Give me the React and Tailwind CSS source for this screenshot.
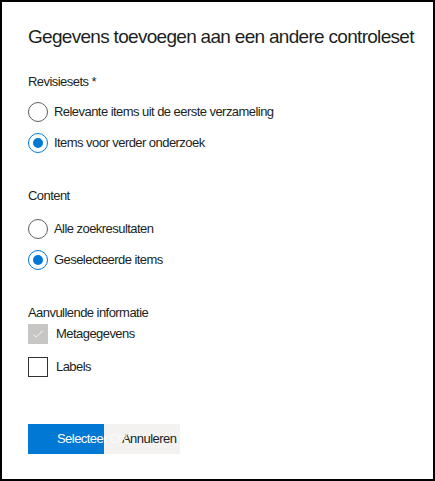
import React from 'react';

// --- CONTROLS ---
function Radio({ label, checked }) {
    return (
        <div className="flex items-center h-[20px]">
            <span className={`flex h-[20px] w-[20px] shrink-0 items-center justify-center rounded-full border ${checked ? 'border-[#0078d4]' : 'border-[#605e5c]'}`}>
                {checked && <span className="h-[10px] w-[10px] rounded-full bg-[#0078d4]"></span>}
            </span>
            <span className="ml-[6px] text-[13px] text-[#201f1e] tracking-[-0.55px]">{label}</span>
        </div>
    );
}

function Checkbox({ label, checked, disabled }) {
    return (
        <div className="flex items-center h-[20px]">
            <span className={`flex h-[20px] w-[20px] shrink-0 items-center justify-center ${disabled ? 'bg-[#c8c6c4]' : 'border border-[#323130] bg-white'}`}>
                {checked && (
                    <svg viewBox="0 0 16 16" className="h-[14px] w-[14px]" fill="none" stroke="#ffffff" strokeWidth="1">
                        <path d="M3 8.5l3 3 7-7" />
                    </svg>
                )}
            </span>
            <span className="ml-[8px] text-[13px] text-[#201f1e] tracking-[-0.55px]">{label}</span>
        </div>
    );
}

export default function App() {
    return (
        <div className="w-[435px] h-[481px] border-2 border-black bg-white font-['Liberation_Sans',Arial,sans-serif] text-[#201f1e]">
            <div className="pl-[26px] pt-[22px]">
                <h1 className="text-[19px] leading-[26px] tracking-[-0.7px] whitespace-nowrap text-[#201f1e]">Gegevens toevoegen aan een andere controleset</h1>

                {/* Revisiesets */}
                <div className="mt-[23px] text-[13px] leading-[18px] tracking-[-0.55px]">Revisiesets *</div>
                <div className="mt-[11px] flex flex-col gap-[11px]">
                    <Radio label="Relevante items uit de eerste verzameling" />
                    <Radio label="Items voor verder onderzoek" checked />
                </div>

                {/* Content */}
                <div className="mt-[34px] text-[13px] leading-[18px] tracking-[-0.55px]">Content</div>
                <div className="mt-[14px] flex flex-col gap-[11px]">
                    <Radio label="Alle zoekresultaten" />
                    <Radio label="Geselecteerde items" checked />
                </div>

                {/* Aanvullende informatie */}
                <div className="mt-[34px] text-[13px] leading-[18px] tracking-[-0.55px]">Aanvullende informatie</div>
                <div className="mt-[2px] flex flex-col gap-[13px]">
                    <Checkbox label="Metagegevens" checked disabled />
                    <Checkbox label="Labels" />
                </div>

                {/* Knoppen */}
                <div className="mt-[47px] flex">
                    <button className="relative z-10 h-[30px] w-[76px] shrink-0 bg-[#0078d4] pl-[29px] text-left text-[13px] text-white whitespace-nowrap tracking-[-0.55px]">
                        Selecteer <span className="text-[#fafafa]">OK</span>
                    </button>
                    <button className="h-[30px] w-[76px] shrink-0 bg-[#f3f2f1] pl-[18px] text-left text-[13px] text-[#201f1e] tracking-[-0.55px]">
                        Annuleren
                    </button>
                </div>
            </div>
        </div>
    );
}
